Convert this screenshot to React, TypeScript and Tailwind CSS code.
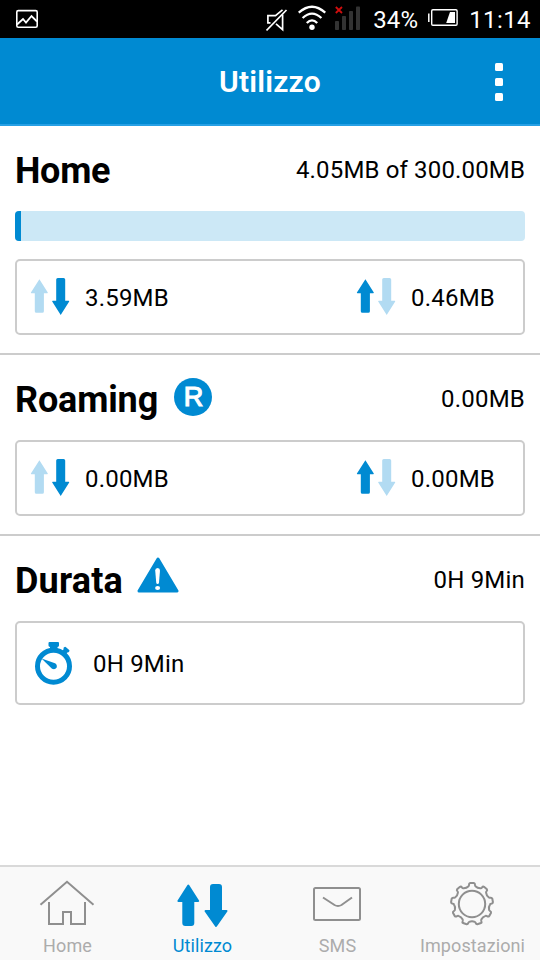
interface ArrowsProps {
  upClass: string
  downClass: string
}

interface TrafficProps {
  download: string
  upload: string
}

const BLUE = "#008ad2"

const Arrows = ({ upClass, downClass }: ArrowsProps) => (
  <svg width="40" height="40" viewBox="0 0 40 40" className="shrink-0">
    <path
      className={upClass}
      d="M9.4 2.2 L17.8 15.6 Q18 16.2 17.2 16.2 H13.9 V34.2 Q13.9 35.8 12.3 35.8 H6.4 Q4.8 35.8 4.8 34.2 V16.2 H1.5 Q0.7 16.2 0.9 15.6 Z"
    />
    <path
      className={downClass}
      d="M30.7 38 L22.2 24.4 Q22 23.8 22.8 23.8 H26.2 V2.6 Q26.2 1 27.8 1 H33.6 Q35.2 1 35.2 2.6 V23.8 H38.6 Q39.4 23.8 39.2 24.4 Z"
    />
  </svg>
)

const Traffic = ({ download, upload }: TrafficProps) => (
  <div className="flex h-[76px] items-center justify-between rounded-[5px] border-2 border-[#cccccc] pl-[13px] pr-7">
    <div className="flex items-center gap-[15px]">
      <Arrows upClass="fill-[#b2dbf2]" downClass="fill-[#008ad2]" />
      <span className="pt-[2px]">{download}</span>
    </div>
    <div className="flex items-center gap-[15px]">
      <Arrows upClass="fill-[#008ad2]" downClass="fill-[#b2dbf2]" />
      <span className="pt-[2px]">{upload}</span>
    </div>
  </div>
)

const StatusBar = () => (
  <div className="flex h-[38px] items-center bg-black pl-4 pr-[9px] text-white">
    <svg width="22" height="38" fill="none" stroke="#fff" strokeWidth="1.6">
      <rect x="0.8" y="10.6" width="20.4" height="16.6" rx="1.5" />
      <path d="M1 24.5 L7 19 L10 22.5 L15.5 16 L21 21.5" strokeWidth="1.8" />
    </svg>
    <div className="ml-auto flex items-center">
      <svg width="22" height="38" fill="none" stroke="#fff" strokeWidth="1.7">
        <path d="M16.5 9.8 L9.5 15.6 H1.9 V22.8 H4.5" />
        <path d="M10 23.8 L16.6 29.6 V14.5" />
        <path d="M0.5 30.5 L20.5 10" />
      </svg>
      <svg width="28" height="38" fill="none" stroke="#fff" className="ml-[10px]">
        <path d="M0.7 12.6 Q14 0.8 27.3 12.6" strokeWidth="2.3" />
        <path d="M4.6 18 Q14 9.2 23.4 18" strokeWidth="2.3" />
        <path d="M8.8 23 Q14 17.6 19.2 23" strokeWidth="2.3" />
        <circle cx="14" cy="27.2" r="2.7" fill="#fff" stroke="none" />
      </svg>
      <svg width="26" height="38" className="ml-[9px]">
        <g fill="#333">
          <rect x="0" y="21" width="4" height="9" rx="0.8" />
          <rect x="7" y="16" width="4" height="14" rx="0.8" />
          <rect x="14" y="11" width="4" height="19" rx="0.8" />
          <rect x="21" y="6.5" width="4" height="23.5" rx="0.8" />
        </g>
        <path d="M0.8 7 L7 13 M7 7 L0.8 13" stroke="#d00e0e" strokeWidth="1.8" />
      </svg>
      <span className="ml-[12px] w-[55px] pt-[2px] text-[24px] leading-[36px] tracking-[0.1px]">34%</span>
      <svg width="30" height="38" fill="none" stroke="#fff">
        <rect x="3.7" y="9.8" width="25.4" height="15.4" rx="1.2" strokeWidth="1.4" />
        <path d="M0.8 13.5 V22" strokeWidth="1.5" />
        <path d="M22 12 H27 V23 H18.2 Z" fill="#fff" stroke="none" />
      </svg>
      <span className="ml-[11px] pt-[2px] text-[24px] leading-[36px] tracking-[0.4px]">11:14</span>
    </div>
  </div>
)

const Header = () => (
  <header className="relative flex h-[88px] items-center justify-center border-b-2 border-[#27a0e5] bg-[#008ad2]">
    <h1 className="pt-[2px] text-[30px] font-semibold leading-none text-white">Utilizzo</h1>
    <button className="absolute right-[37px] top-[25.4px] flex flex-col gap-[7px]">
      <span className="size-2 rounded-[1.5px] bg-white" />
      <span className="size-2 rounded-[1.5px] bg-white" />
      <span className="size-2 rounded-[1.5px] bg-white" />
    </button>
  </header>
)

const RoamingIcon = () => (
  <span className="mb-[5px] ml-4 flex size-[38px] items-center justify-center rounded-full bg-[#008ad2] pl-px pt-px font-['Liberation_Sans'] text-[27px] leading-none text-white [-webkit-text-stroke:1.2px_white]">
    R
  </span>
)

const WarningIcon = () => (
  <svg width="42" height="36" viewBox="0 0 42 36" className="mb-[11px] ml-[14px]" fill="#fff">
    <path
      d="M21 2 L40 34 H2 Z"
      fill={BLUE}
      stroke={BLUE}
      strokeWidth="3"
      strokeLinejoin="round"
    />
    <path d="M18.2 13.5 Q18.2 11 20.6 11 Q23 11 23 13.5 L22 25.5 Q21.8 27 20.6 27 Q19.4 27 19.2 25.5 Z" />
    <ellipse cx="20.6" cy="31" rx="2.5" ry="2.1" />
  </svg>
)

const StopwatchIcon = () => (
  <svg width="38" height="44" viewBox="0 0 38 44" fill={BLUE}>
    <circle cx="18.5" cy="25.2" r="16" fill="none" stroke={BLUE} strokeWidth="5" />
    <path d="M14.5 1 H23 Q24 1 24 2 V4.5 Q24 5.5 22.5 6 V9 H15 V6 Q13.5 5.5 13.5 4.5 V2 Q13.5 1 14.5 1 Z" />
    <path d="M26.5 10.8 L28.8 8 Q28 7.4 28.8 6.6 L29.6 6 Q30.4 5.6 31 6.2 L34.2 9 Q34.8 9.6 34.2 10.4 L33.4 11.2 Q32.8 11.8 32.2 11.4 L30 14 Z" />
    <path d="M6.5 17.4 L20 22.2 Q22.6 23.8 21.6 26.6 Q20 29.2 17 27.8 Z" />
  </svg>
)

const HomeIcon = () => (
  <svg width="57" height="48" fill="none" stroke="#8f8f8f" strokeWidth="2">
    <path d="M1.5 24.8 L28 1.8 L54.5 24.8" />
    <path d="M10 22 V44 H24 V32 H32 V44 H46 V22" />
  </svg>
)

const UsageIcon = () => (
  <svg width="53" height="48" fill={BLUE} stroke={BLUE} strokeWidth="2" strokeLinejoin="round">
    <path d="M12.3 5.5 L22.2 21 H17.3 V43 Q17.3 45 15.3 45 H9.3 Q7.3 45 7.3 43 V21 H2.4 Z" />
    <path d="M40 46 L29.5 31 H35 V7 Q35 5 37 5 H43 Q45 5 45 7 V31 H50.5 Z" />
  </svg>
)

const MailIcon = () => (
  <svg width="51" height="48" fill="none" stroke="#8f8f8f" strokeWidth="2">
    <rect x="2" y="8" width="46" height="32" rx="1.5" />
    <path d="M11 17.5 L22.5 25 Q26 27 29.5 25 L40 17.5" />
  </svg>
)

const TEETH = 9

// Outline of the cog: two rim points and two tip points for every tooth
const gearPath = () => {
  const at = (r: number, deg: number) => {
    const a = ((deg - 90) * Math.PI) / 180
    return `${(24 + r * Math.cos(a)).toFixed(2)} ${(24 + r * Math.sin(a)).toFixed(2)}`
  }
  let d = ""
  for (let i = 0; i < TEETH; i++) {
    const c = (i * 360) / TEETH
    d += `${i === 0 ? "M" : "L"}${at(18.1, c - 11)} Q${at(18.2, c - 9.5)} ${at(19.2, c - 9)} `
    d += `Q${at(20.9, c - 8.5)} ${at(21, c - 5)} L${at(21, c + 5)} `
    d += `Q${at(20.9, c + 8.5)} ${at(19.2, c + 9)} Q${at(18.2, c + 9.5)} ${at(18.1, c + 11)} `
    d += `Q${at(16.6, c + 20)} ${at(18.1, c + 29)} `
  }
  return d + "Z"
}

const GearIcon = () => (
  <svg width="49" height="48" fill="none" stroke="#8f8f8f" strokeWidth="2">
    <path d={gearPath()} />
    <circle cx="24" cy="24" r="13.2" />
  </svg>
)

const tabs = [
  { label: "Home", icon: <HomeIcon /> },
  { label: "Utilizzo", icon: <UsageIcon />, active: true },
  { label: "SMS", icon: <MailIcon /> },
  { label: "Impostazioni", icon: <GearIcon /> },
]

const TabBar = () => (
  <nav className="mt-auto flex h-[95px] border-t-2 border-[#d9d9d9] bg-[#f9f9f9]">
    {tabs.map((tab) => (
      <button
        key={tab.label}
        className={`flex flex-1 basis-0 flex-col items-center pt-[13px] text-[18px] leading-[22px] tracking-[0.1px] ${
          tab.active ? "text-[#008ad2]" : "text-[#acacac]"
        }`}
      >
        {tab.icon}
        <span className="mt-[7px]">{tab.label}</span>
      </button>
    ))}
  </nav>
)

export default function App() {
  return (
    <div className="flex h-[960px] w-[540px] flex-col overflow-hidden bg-white font-[Roboto,sans-serif] text-[24px] leading-[30px] tracking-[0.2px] text-black">
      <StatusBar />
      <Header />

      <section className="h-[229px] border-b-2 border-[#cccccc] px-[15px]">
        <div className="flex h-[85px] items-center pt-[3px]">
          <h2 className="pt-[2px] text-[36px] font-bold leading-none tracking-[-0.3px]">Home</h2>
          <span className="ml-auto tracking-[0.15px]">4.05MB of 300.00MB</span>
        </div>
        <div className="mb-[18px] h-[30px] overflow-hidden rounded bg-[#cce8f6]">
          <div className="h-full w-[6px] bg-[#008ad2]" />
        </div>
        <Traffic download="3.59MB" upload="0.46MB" />
      </section>

      <section className="h-[181px] border-b-2 border-[#cccccc] px-[15px]">
        <div className="flex h-[85px] items-center pt-[3px]">
          <h2 className="pt-[2px] text-[36px] font-bold leading-none tracking-[-0.15px]">Roaming</h2>
          <RoamingIcon />
          <span className="ml-auto">0.00MB</span>
        </div>
        <Traffic download="0.00MB" upload="0.00MB" />
      </section>

      <section className="px-[15px]">
        <div className="flex h-[85px] items-center pt-[3px]">
          <h2 className="pt-[2px] text-[36px] font-bold leading-none">Durata</h2>
          <WarningIcon />
          <span className="ml-auto">0H 9Min</span>
        </div>
        <div className="flex h-[84px] items-center gap-5 rounded-[5px] border-2 border-[#cccccc] pl-[18px]">
          <StopwatchIcon />
          <span className="pt-[2px]">0H 9Min</span>
        </div>
      </section>

      <TabBar />
    </div>
  )
}
